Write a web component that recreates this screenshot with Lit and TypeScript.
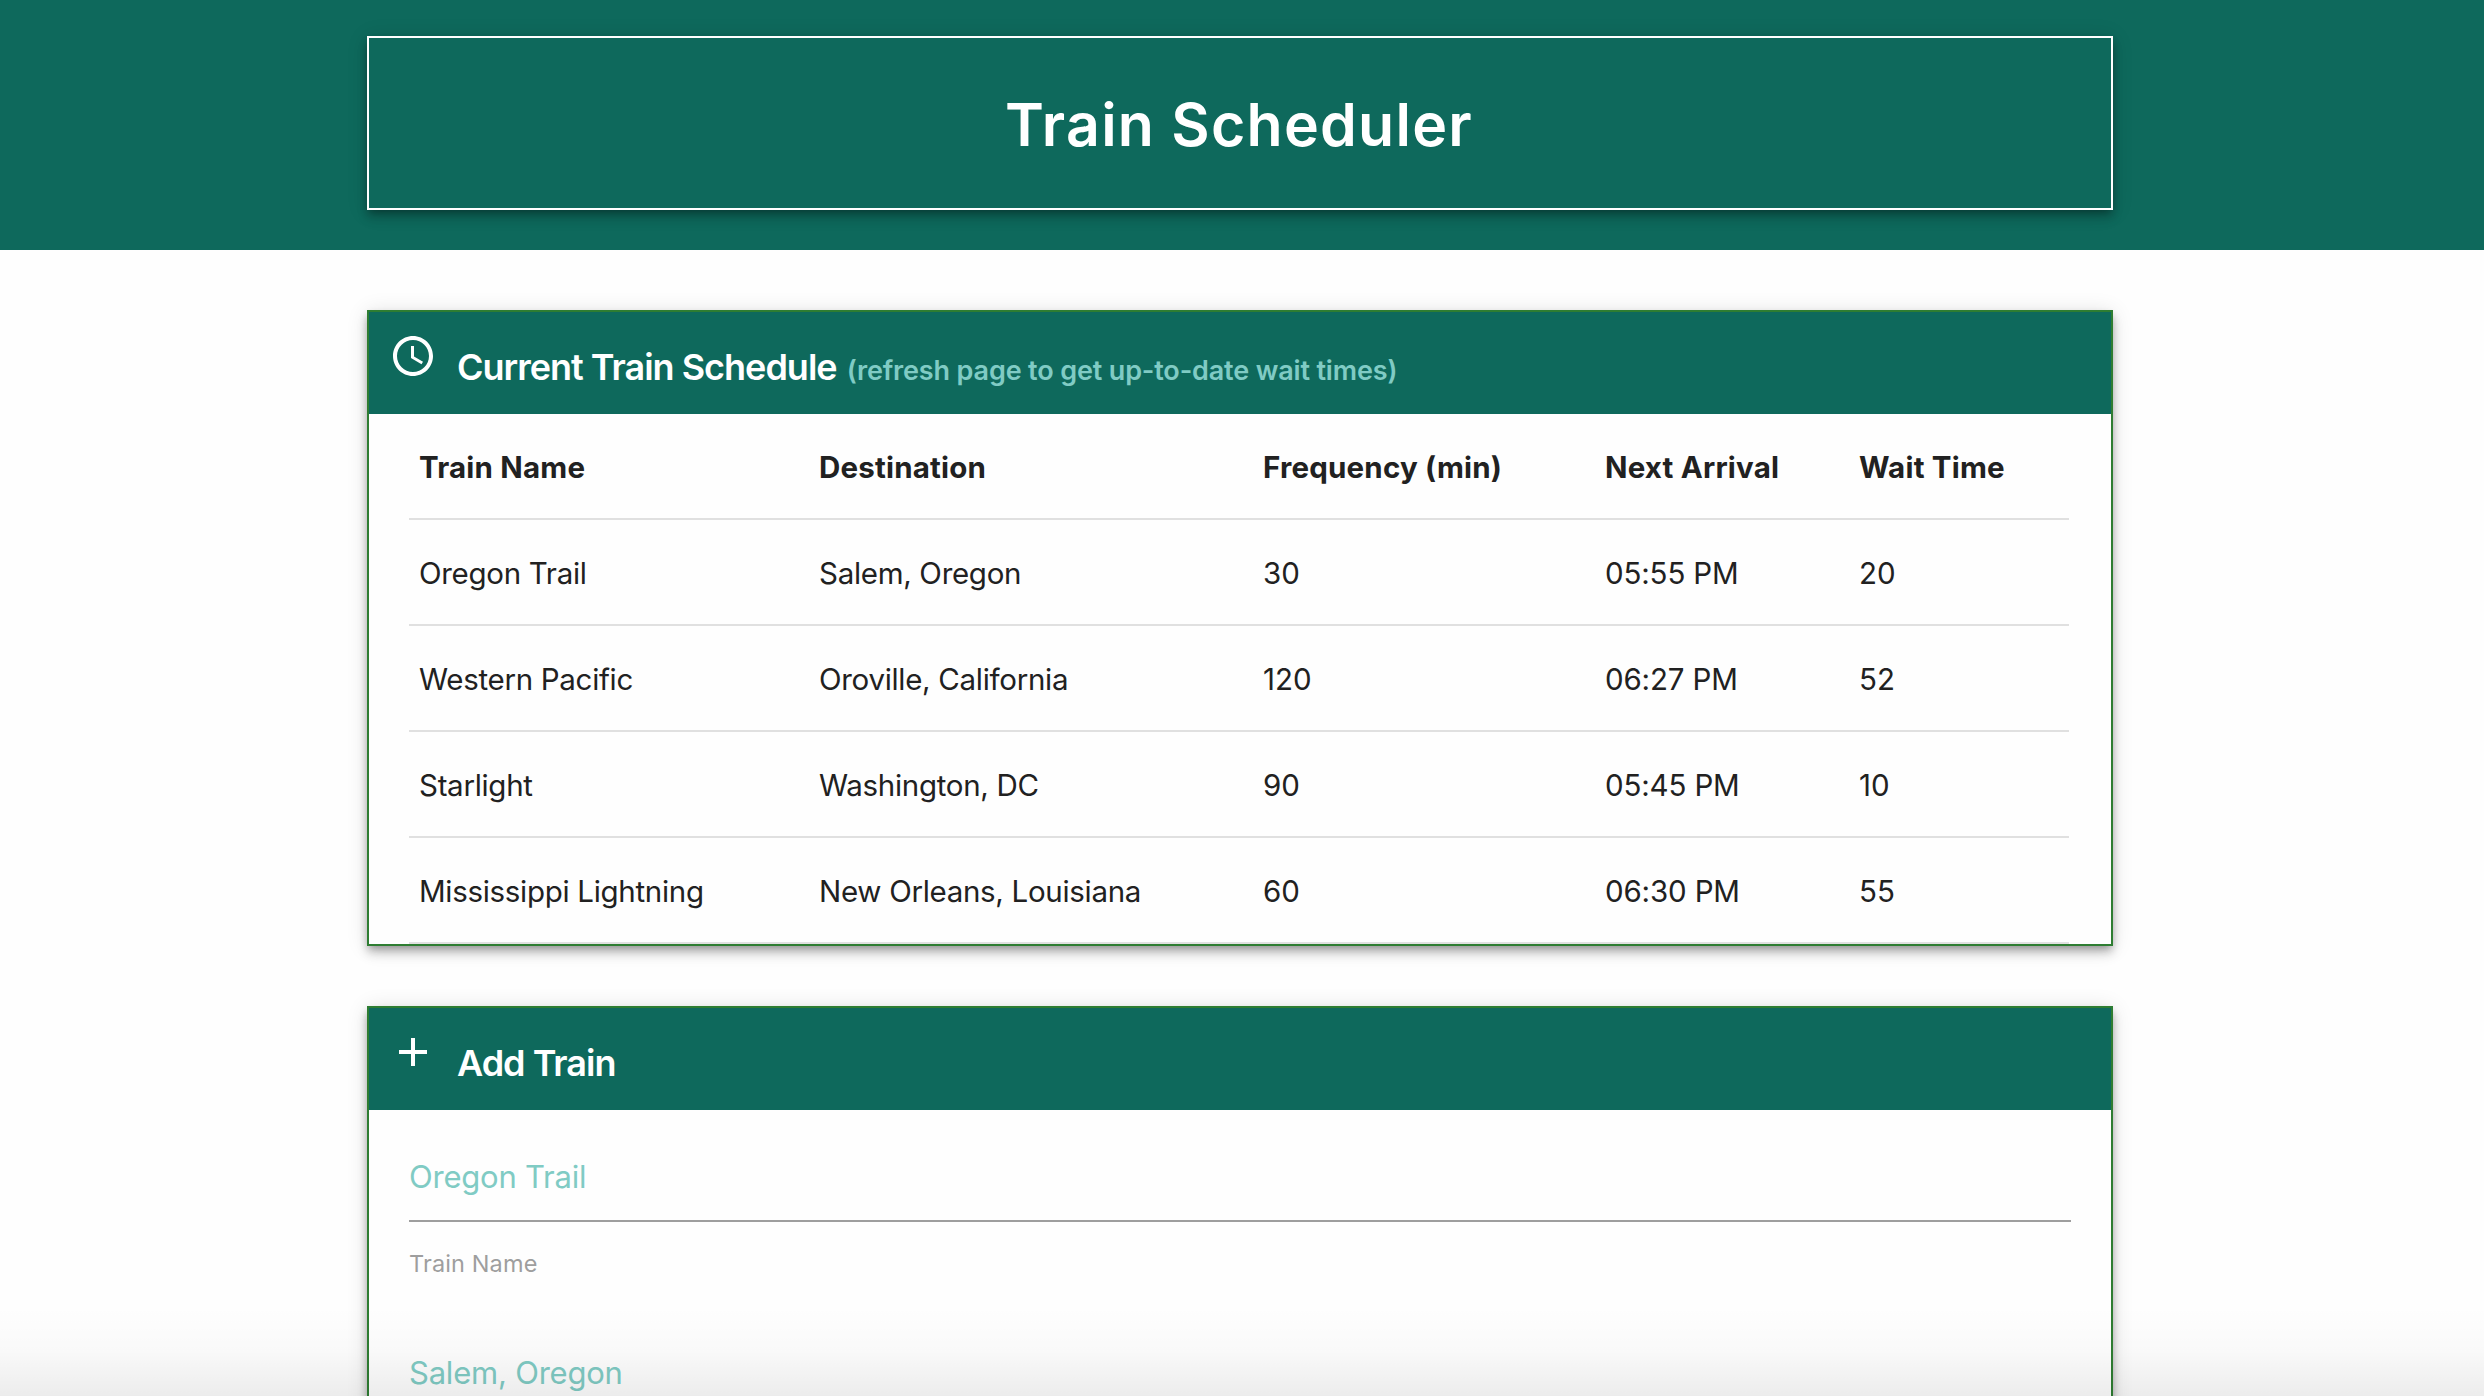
import { LitElement, html, css, svg } from "lit";
import { customElement, state } from "lit/decorators.js";

const clockIcon = svg`<path d="M11.99 2C6.47 2 2 6.48 2 12s4.47 10 9.99 10C17.52 22 22 17.52 22 12S17.52 2 11.99 2zM12 20c-4.42 0-8-3.58-8-8s3.58-8 8-8 8 3.58 8 8-3.58 8-8 8z"/><path d="M12.5 7H11v6l5.25 3.15.75-1.23-4.5-2.67z"/>`;
const plusIcon = svg`<path d="M19 13h-6v6h-2v-6H5v-2h6V5h2v6h6v2z"/>`;

@customElement("app-root")
export class AppRoot extends LitElement {
  static styles = css`
    :host {
      display: block;
      position: relative;
      height: 1396px;
      overflow: hidden;
      background: #fefefe;
      color: #212121;
      font-family: Inter, "Liberation Sans", sans-serif;
      font-size: 29.5px;
    }
    * { box-sizing: border-box; }
    .banner { background: #0e695c; padding: 36px 371px 40px 367px; }
    .banner h1 {
      margin: 0;
      height: 174px;
      padding: 4px 2px 0 0;
      border: 2px solid #fff;
      display: flex;
      align-items: center;
      justify-content: center;
      color: #fff;
      font-size: 59px;
      font-weight: 620;
      letter-spacing: 1.25px;
      line-height: 70px;
    }
    .banner h1, .panel {
      box-shadow: 0 8px 10px 0 rgba(0, 0, 0, 0.14), 0 2px 20px 0 rgba(0, 0, 0, 0.12), 0 4px 8px -2px rgba(0, 0, 0, 0.3);
    }
    main { display: flex; flex-direction: column; gap: 60px; padding: 60px 371px 0 367px; }
    .panel { border: 2px solid #2e7d32; }
    .head {
      height: 102px;
      background: #0e695c;
      color: #fff;
      display: flex;
      align-items: flex-start;
      padding: 20px 20px 0;
      gap: 20px;
    }
    .head svg { width: 48px; height: 48px; fill: #fff; flex: none; }
    .head h2 { margin: 13px 0 0; font-size: 36px; font-weight: 610; line-height: 44px; letter-spacing: -1px; white-space: nowrap; }
    .head small { font-size: 27px; font-weight: 560; letter-spacing: -0.15px; color: #80cbc4; margin-left: 2px; }
    table { margin: 0 42px 0 40px; width: 1660px; border-collapse: separate; border-spacing: 0; table-layout: fixed; }
    th, td { height: 106px; padding: 2px 10px 0; text-align: left; border-bottom: 2px solid #e0e0e0; white-space: nowrap; }
    th { font-weight: 700; letter-spacing: 0.2px; }
    td:nth-child(-n + 2) { letter-spacing: -0.3px; }
    td:nth-child(4) { letter-spacing: -0.15px; }
    .c0 { width: 400px; } .c1 { width: 444px; } .c2 { width: 342px; } .c3 { width: 254px; } .c4 { width: 220px; }
    .form { padding: 20px 40px 60px; }
    .field { height: 196px; display: flex; flex-direction: column; }
    .field input {
      height: 92px;
      flex: none;
      border: 0;
      border-bottom: 2px solid #9e9e9e;
      background: transparent;
      padding: 2px 0 0;
      outline: none;
      font: 400 31px Inter, "Liberation Sans", sans-serif;
      letter-spacing: -0.22px;
    }
    .field input::placeholder { color: #80cbc4; opacity: 1; }
    .field label { margin-top: 26px; font-size: 23.5px; line-height: 32px; letter-spacing: 0.12px; color: #9e9e9e; }
    .fade {
      position: absolute;
      left: 0; right: 0; bottom: 0;
      height: 90px;
      background: linear-gradient(to bottom, rgba(0, 0, 0, 0), rgba(0, 0, 0, 0.02) 50%, rgba(0, 0, 0, 0.07));
      pointer-events: none;
    }
  `;

  @state() private columns = ["Train Name", "Destination", "Frequency (min)", "Next Arrival", "Wait Time"];
  @state() private trains = [
    ["Oregon Trail", "Salem, Oregon", "30", "05:55 PM", "20"],
    ["Western Pacific", "Oroville, California", "120", "06:27 PM", "52"],
    ["Starlight", "Washington, DC", "90", "05:45 PM", "10"],
    ["Mississippi Lightning", "New Orleans, Louisiana", "60", "06:30 PM", "55"],
  ];
  private fields = [
    { label: "Train Name", hint: "Oregon Trail" },
    { label: "Destination", hint: "Salem, Oregon" },
  ];

  render() {
    return html`
      <header class="banner"><h1>Train Scheduler</h1></header>
      <main>
        <section class="panel">
          <div class="head">
            <svg viewBox="0 0 24 24">${clockIcon}</svg>
            <h2>Current Train Schedule <small>(refresh page to get up-to-date wait times)</small></h2>
          </div>
          <table>
            <thead><tr>${this.columns.map((c, i) => html`<th class="c${i}">${c}</th>`)}</tr></thead>
            <tbody>${this.trains.map((t) => html`<tr>${t.map((v) => html`<td>${v}</td>`)}</tr>`)}</tbody>
          </table>
        </section>
        <section class="panel">
          <div class="head">
            <svg viewBox="0 0 24 24">${plusIcon}</svg>
            <h2>Add Train</h2>
          </div>
          <form class="form">
            ${this.fields.map((f) => html`<div class="field"><input type="text" placeholder=${f.hint} /><label>${f.label}</label></div>`)}
          </form>
        </section>
      </main>
      <div class="fade"></div>
    `;
  }
}
